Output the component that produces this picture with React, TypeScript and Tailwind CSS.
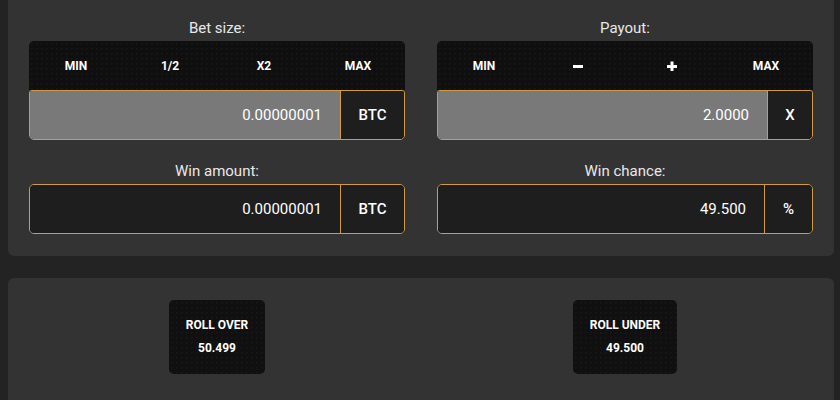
import React from "react"

const font = { fontFamily: "Roboto, 'Noto Sans', Arial, sans-serif" }

function Minus() {
  return (
    <svg width="10" height="10" viewBox="0 0 10 10" className="inline-block">
      <rect x="0" y="4" width="10" height="3" fill="white" />
    </svg>
  )
}

function Plus() {
  return (
    <svg width="10" height="10" viewBox="0 0 10 10" className="inline-block">
      <rect x="0" y="4" width="10" height="3" fill="white" />
      <rect x="3.5" y="0.5" width="3" height="10" fill="white" />
    </svg>
  )
}

function ButtonBar({ items }: { items: React.ReactNode[] }) {
  return (
    <div className="flex h-[49px] items-center rounded-t-[5px] bg-[#0f0f0f] bg-[radial-gradient(#171717_1px,transparent_1px)] bg-[length:5px_5px]">
      {items.map((item, idx) => (
        <button
          key={idx}
          className="flex flex-1 items-center justify-center text-[12px] font-bold text-white"
        >
          {item}
        </button>
      ))}
    </div>
  )
}

function Field({
  value,
  unit,
  unitWidth,
  gray,
  topSquare,
}: {
  value: string
  unit: string
  unitWidth: string
  gray?: boolean
  topSquare?: boolean
}) {
  return (
    <div
      className={`flex h-[50px] overflow-hidden border border-[#cf9c45] ${
        topSquare ? "rounded-b-[5px] rounded-t-[3px]" : "rounded-[5px]"
      }`}
    >
      <div
        className={`flex flex-1 items-center justify-end pr-[18px] text-[15px] text-white ${
          gray ? "bg-[#797979]" : "bg-[#1e1e1e]"
        }`}
      >
        {value}
      </div>
      <div
        className={`flex ${unitWidth} items-center justify-center border-l border-[#cf9c45] bg-[#1e1e1e] text-[15px] font-medium text-white`}
      >
        {unit}
      </div>
    </div>
  )
}

function Label({ children }: { children: React.ReactNode }) {
  return (
    <div className="mb-[3px] h-[20px] text-center text-[15px] leading-[20px] text-[#e8e8e8]">
      {children}
    </div>
  )
}

function RollButton({ title, value }: { title: string; value: string }) {
  return (
    <button className="flex h-[74px] flex-col items-center justify-center gap-[8px] rounded-[5px] bg-[#101010] bg-[radial-gradient(#171717_1px,transparent_1px)] bg-[length:5px_5px] px-[17px] text-[12px] font-bold leading-[15px] text-white">
      <span>{title}</span>
      <span>{value}</span>
    </button>
  )
}

export default function App() {
  return (
    <div className="h-[400px] w-[840px] overflow-hidden bg-[#232323]" style={font}>
      <div className="mx-[8px] w-[826px] rounded-b-[6px] bg-[#333333] px-[21px] pb-[22px] pt-[18px]">
        <div className="flex gap-[32px]">
          <div className="flex-1">
            <Label>Bet size:</Label>
            <ButtonBar items={["MIN", "1/2", "X2", "MAX"]} />
            <Field value="0.00000001" unit="BTC" unitWidth="w-[64px]" gray topSquare />
            <div className="mt-[21px]">
              <Label>Win amount:</Label>
              <Field value="0.00000001" unit="BTC" unitWidth="w-[64px]" />
            </div>
          </div>
          <div className="flex-1">
            <Label>Payout:</Label>
            <ButtonBar items={["MIN", <Minus key="m" />, <Plus key="p" />, "MAX"]} />
            <Field value="2.0000" unit="X" unitWidth="w-[45px]" gray topSquare />
            <div className="mt-[21px]">
              <Label>Win chance:</Label>
              <Field value="49.500" unit="%" unitWidth="w-[48px]" />
            </div>
          </div>
        </div>
      </div>

      <div className="mx-[8px] mt-[22px] h-[200px] w-[826px] rounded-t-[6px] bg-[#333333] px-[21px] pt-[22px]">
        <div className="flex gap-[32px]">
          <div className="flex flex-1 justify-center">
            <RollButton title="ROLL OVER" value="50.499" />
          </div>
          <div className="flex flex-1 justify-center">
            <RollButton title="ROLL UNDER" value="49.500" />
          </div>
        </div>
      </div>
    </div>
  )
}
